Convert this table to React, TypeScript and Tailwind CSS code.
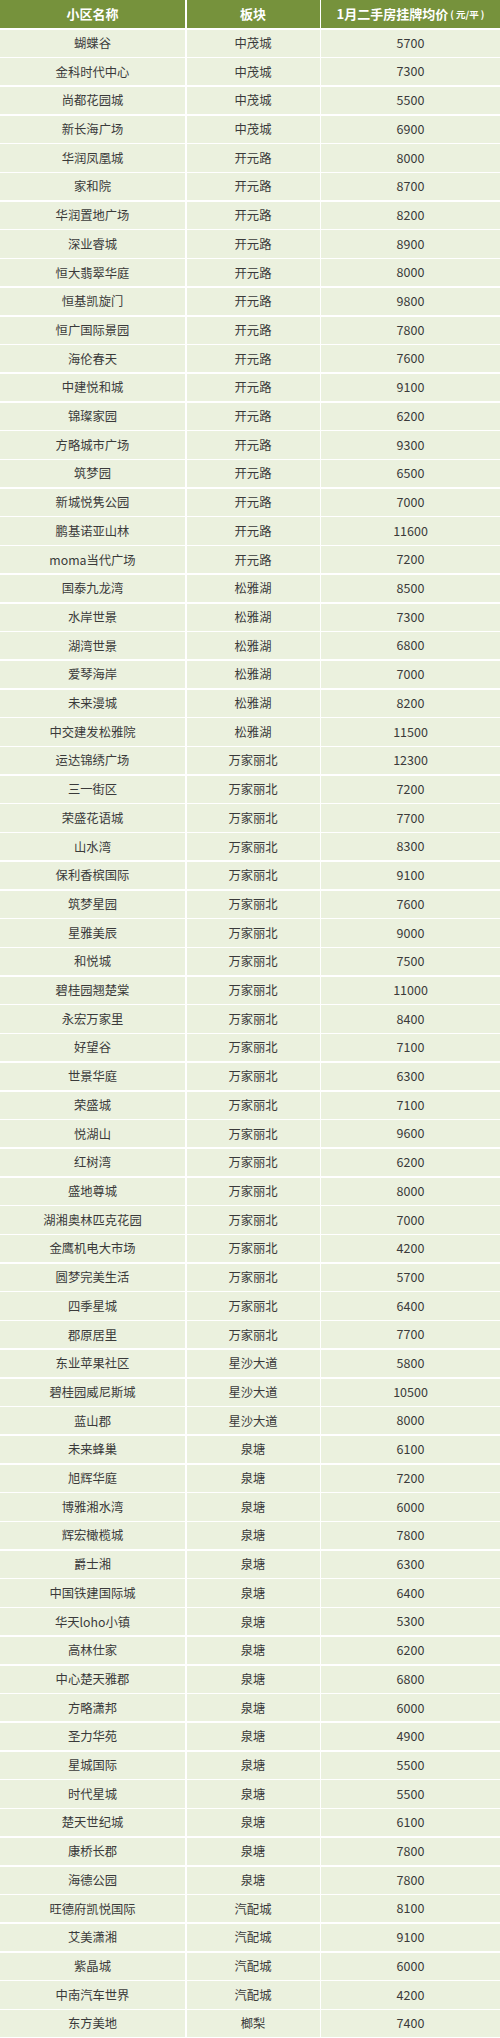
import React from 'react';

const rows: [string, string, string][] = [
  ['蝴蝶谷', '中茂城', '5700'],
  ['金科时代中心', '中茂城', '7300'],
  ['尚都花园城', '中茂城', '5500'],
  ['新长海广场', '中茂城', '6900'],
  ['华润凤凰城', '开元路', '8000'],
  ['家和院', '开元路', '8700'],
  ['华润置地广场', '开元路', '8200'],
  ['深业睿城', '开元路', '8900'],
  ['恒大翡翠华庭', '开元路', '8000'],
  ['恒基凯旋门', '开元路', '9800'],
  ['恒广国际景园', '开元路', '7800'],
  ['海伦春天', '开元路', '7600'],
  ['中建悦和城', '开元路', '9100'],
  ['锦璨家园', '开元路', '6200'],
  ['方略城市广场', '开元路', '9300'],
  ['筑梦园', '开元路', '6500'],
  ['新城悦隽公园', '开元路', '7000'],
  ['鹏基诺亚山林', '开元路', '11600'],
  ['moma当代广场', '开元路', '7200'],
  ['国泰九龙湾', '松雅湖', '8500'],
  ['水岸世景', '松雅湖', '7300'],
  ['湖湾世景', '松雅湖', '6800'],
  ['爱琴海岸', '松雅湖', '7000'],
  ['未来漫城', '松雅湖', '8200'],
  ['中交建发松雅院', '松雅湖', '11500'],
  ['运达锦绣广场', '万家丽北', '12300'],
  ['三一街区', '万家丽北', '7200'],
  ['荣盛花语城', '万家丽北', '7700'],
  ['山水湾', '万家丽北', '8300'],
  ['保利香槟国际', '万家丽北', '9100'],
  ['筑梦星园', '万家丽北', '7600'],
  ['星雅美辰', '万家丽北', '9000'],
  ['和悦城', '万家丽北', '7500'],
  ['碧桂园翘楚棠', '万家丽北', '11000'],
  ['永宏万家里', '万家丽北', '8400'],
  ['好望谷', '万家丽北', '7100'],
  ['世景华庭', '万家丽北', '6300'],
  ['荣盛城', '万家丽北', '7100'],
  ['悦湖山', '万家丽北', '9600'],
  ['红树湾', '万家丽北', '6200'],
  ['盛地尊城', '万家丽北', '8000'],
  ['湖湘奥林匹克花园', '万家丽北', '7000'],
  ['金鹰机电大市场', '万家丽北', '4200'],
  ['圆梦完美生活', '万家丽北', '5700'],
  ['四季星城', '万家丽北', '6400'],
  ['郡原居里', '万家丽北', '7700'],
  ['东业苹果社区', '星沙大道', '5800'],
  ['碧桂园威尼斯城', '星沙大道', '10500'],
  ['蓝山郡', '星沙大道', '8000'],
  ['未来蜂巢', '泉塘', '6100'],
  ['旭辉华庭', '泉塘', '7200'],
  ['博雅湘水湾', '泉塘', '6000'],
  ['辉宏橄榄城', '泉塘', '7800'],
  ['爵士湘', '泉塘', '6300'],
  ['中国铁建国际城', '泉塘', '6400'],
  ['华天loho小镇', '泉塘', '5300'],
  ['高林仕家', '泉塘', '6200'],
  ['中心楚天雅郡', '泉塘', '6800'],
  ['方略潇邦', '泉塘', '6000'],
  ['圣力华苑', '泉塘', '4900'],
  ['星城国际', '泉塘', '5500'],
  ['时代星城', '泉塘', '5500'],
  ['楚天世纪城', '泉塘', '6100'],
  ['康桥长郡', '泉塘', '7800'],
  ['海德公园', '泉塘', '7800'],
  ['旺德府凯悦国际', '汽配城', '8100'],
  ['艾美潇湘', '汽配城', '9100'],
  ['紫晶城', '汽配城', '6000'],
  ['中南汽车世界', '汽配城', '4200'],
  ['东方美地', '榔梨', '7400'],
];

export default function App() {
  return (
    <main
      className="w-[500px] bg-white"
      style={{ fontFamily: '"Noto Sans CJK SC", "Noto Sans", sans-serif' }}
    >
      <div className="grid grid-cols-[185px_133px_1fr] gap-x-[1.5px] gap-y-[1.5px] bg-white">
        {/* Header */}
        <div className="h-[28px] bg-[#76923c] flex items-center justify-center text-white font-bold text-[13px]">
          小区名称
        </div>
        <div className="h-[28px] bg-[#76923c] flex items-center justify-center text-white font-bold text-[13px]">
          板块
        </div>
        <div className="h-[28px] bg-[#76923c] flex items-center justify-center text-white font-bold text-[13px]">
          1月二手房挂牌均价
          <span className="text-[9.5px] ml-[2px]">( 元/平 )</span>
        </div>

        {/* Rows */}
        {rows.map(([name, area, price], i) => (
          <React.Fragment key={i}>
            <div className="h-[27.21px] bg-[#ebf1de] flex items-center justify-center text-[#3a3a3a] text-[12.3px]">
              {name}
            </div>
            <div className="h-[27.21px] bg-[#ebf1de] flex items-center justify-center text-[#3a3a3a] text-[12.3px]">
              {area}
            </div>
            <div className="h-[27.21px] bg-[#ebf1de] flex items-center justify-center text-[#3a3a3a] text-[12.5px]">
              {price}
            </div>
          </React.Fragment>
        ))}
      </div>
    </main>
  );
}
